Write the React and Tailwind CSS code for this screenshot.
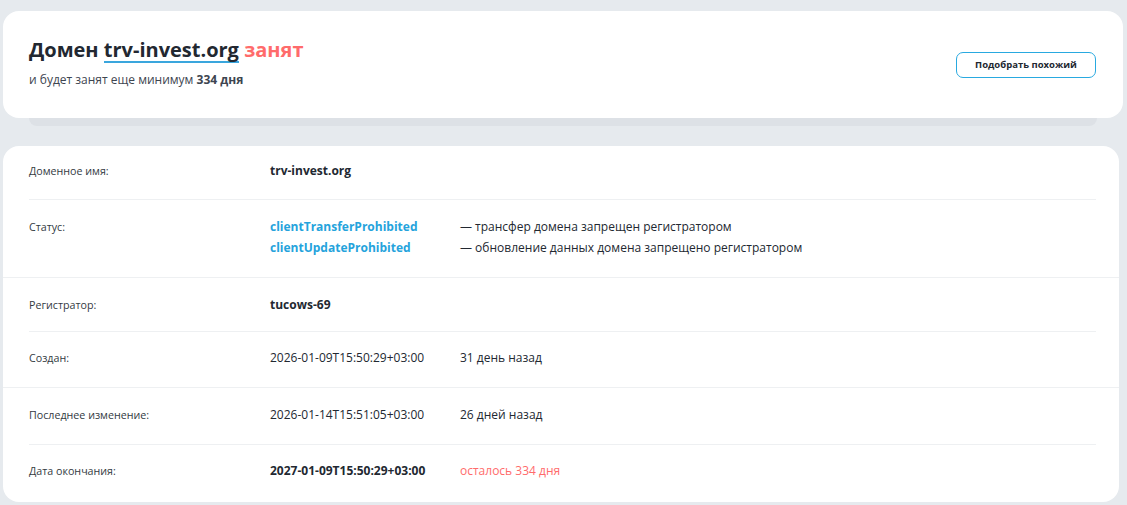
export default function App() {
  const font = { fontFamily: '"Open Sans", "Noto Sans", sans-serif' };
  return (
    <div className="min-h-[505px] w-[1127px] bg-[#e6eaee] pt-[11px] pl-[3px]" style={font}>
      <div className="w-[1120px]">
        <div className="bg-white rounded-[16px] h-[107px] flex items-center justify-between pl-[26px] pr-[27px]">
          <div className="flex flex-col">
            <div className="text-[20px] font-bold leading-[28px] text-[#222831] mt-[-5px]">
              Домен{' '}
              <span className="border-b-2 border-[#3aa6dd] leading-[23px] inline-block">trv-invest.org</span>{' '}
              <span className="text-[#ff6b6b]">занят</span>
            </div>
            <div className="text-[12px] leading-[18px] text-[#3d4550] mt-[7px]">
              и будет занят еще минимум <span className="font-bold">334 дня</span>
            </div>
          </div>
          <button className="w-[140px] h-[26px] rounded-[7px] border border-[#29a9e0] text-[9.5px] font-bold text-[#222831] leading-none">
            Подобрать похожий
          </button>
        </div>
        <div className="mx-[26px] h-[8px] bg-[#dde1e6] rounded-b-[8px]"></div>
      </div>

      <div className="w-[1116px] mt-[20px] bg-white rounded-[16px] text-[#222831]">
        <div className="ml-[26px] mr-[23px] border-b border-[#eef0f2] h-[54px] pt-[16px] flex items-start">
          <div className="w-[241px] shrink-0 text-[10.7px] leading-[18px] text-[#333a42]">Доменное имя:</div>
          <div className="text-[12px] font-bold leading-[18px]">trv-invest.org</div>
        </div>
        <div className="border-b border-[#eef0f2] h-[78px] pt-[18px] px-[26px] flex items-start">
          <div className="w-[241px] shrink-0 text-[10.7px] leading-[18px] text-[#333a42]">Статус:</div>
          <div className="flex flex-col gap-[3px]">
            <div className="flex">
              <div className="w-[190px] shrink-0 text-[12px] font-bold leading-[18px] text-[#25a3dc]">clientTransferProhibited</div>
              <div className="text-[12px] leading-[18px]">— трансфер домена запрещен регистратором</div>
            </div>
            <div className="flex">
              <div className="w-[190px] shrink-0 text-[12px] font-bold leading-[18px] text-[#25a3dc]">clientUpdateProhibited</div>
              <div className="text-[12px] leading-[18px]">— обновление данных домена запрещено регистратором</div>
            </div>
          </div>
        </div>
        <div className="ml-[26px] mr-[23px] border-b border-[#eef0f2] h-[54px] pt-[18px] flex items-start">
          <div className="w-[241px] shrink-0 text-[10.7px] leading-[18px] text-[#333a42]">Регистратор:</div>
          <div className="text-[12px] font-bold leading-[18px]">tucows-69</div>
        </div>
        <div className="border-b border-[#eef0f2] h-[56px] pt-[17px] px-[26px] flex items-start">
          <div className="w-[241px] shrink-0 text-[10.7px] leading-[18px] text-[#333a42]">Создан:</div>
          <div className="w-[190px] shrink-0 text-[12px] leading-[18px]">2026-01-09T15:50:29+03:00</div>
          <div className="text-[12px] leading-[18px]">31 день назад</div>
        </div>
        <div className="ml-[26px] mr-[23px] border-b border-[#eef0f2] h-[57px] pt-[18px] flex items-start">
          <div className="w-[241px] shrink-0 text-[10.7px] leading-[18px] text-[#333a42]">Последнее изменение:</div>
          <div className="w-[190px] shrink-0 text-[12px] leading-[18px]">2026-01-14T15:51:05+03:00</div>
          <div className="text-[12px] leading-[18px]">26 дней назад</div>
        </div>
        <div className="h-[57px] pt-[17px] px-[26px] flex items-start">
          <div className="w-[241px] shrink-0 text-[10.7px] leading-[18px] text-[#333a42]">Дата окончания:</div>
          <div className="w-[190px] shrink-0 text-[12px] font-bold leading-[18px]">2027-01-09T15:50:29+03:00</div>
          <div className="text-[12px] leading-[18px] text-[#ff6b6b]">осталось 334 дня</div>
        </div>
      </div>
    </div>
  );
}
